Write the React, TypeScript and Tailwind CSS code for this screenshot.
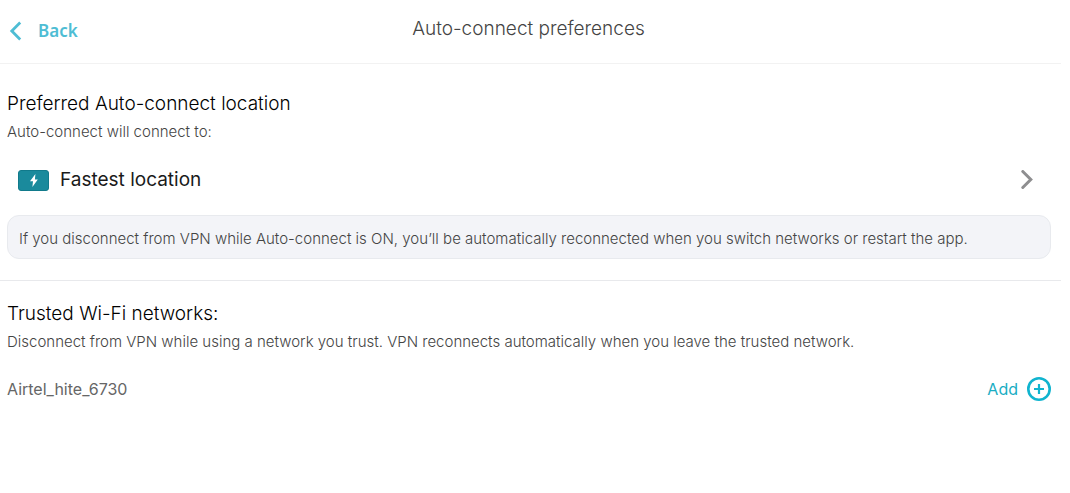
const networks = ['Airtel_hite_6730'];

function Header() {
  return (
    <header className="grid grid-cols-[1fr_auto_1fr] items-start h-16 pt-[17px] pl-2 pr-3 border-b border-[#f2f2f2]">
      <button className="flex items-center gap-4 justify-self-start mt-0.5 font-['Noto_Sans',sans-serif] text-[17px] leading-6 font-semibold text-[#4ebdd4]">
        <svg className="w-[14px] h-5" viewBox="0 0 14 20" fill="none" stroke="currentColor" strokeWidth="2.8" aria-hidden="true">
          <path d="M12.2 1.6 3.8 10l8.4 8.4" />
        </svg>
        Back
      </button>
      <h1 className="text-[19px] leading-6 font-light text-[#444]">Auto-connect preferences</h1>
    </header>
  );
}

function LocationBadge() {
  return (
    <span className="flex items-center justify-center w-[31px] h-[21px] rounded-[3px] border border-[#117a8b] bg-[#1a8a9c]">
      <svg className="w-2 h-[13px]" viewBox="0 0 8 13" fill="#fff" aria-hidden="true">
        <path d="M5.4 0 0 7.3h3L2.4 13 7.8 5.4H4.9z" />
      </svg>
    </span>
  );
}

function AddIcon() {
  return (
    <svg className="w-6 h-6" viewBox="0 0 24 24" fill="none" stroke="#10b4cf" aria-hidden="true">
      <circle cx="12" cy="12" r="10.7" strokeWidth="2.6" />
      <path d="M12 7v10M7 12h10" strokeWidth="2.2" />
    </svg>
  );
}

function SectionTitle({ title, text }: { title: string; text: string }) {
  return (
    <>
      <h2 className="text-[19px] leading-6 font-light text-black">{title}</h2>
      <p className="mt-1 text-[15px] leading-6 font-light text-[#444]">{text}</p>
    </>
  );
}

export default function App() {
  return (
    <div className="min-h-screen bg-white font-['Inter',sans-serif]">
      <main className="mr-[9px]">
        <Header />

        <section className="pl-[7px] pr-[10px] pt-7 pb-[21px] border-b border-[#e8e9ec]">
          <SectionTitle title="Preferred Auto-connect location" text="Auto-connect will connect to:" />

          <button className="mt-6 w-full flex items-center gap-[11px] pl-[11px] pr-[18px] text-left text-[19px] leading-6 text-[#1a1a1a]">
            <LocationBadge />
            <span className="flex-1">Fastest location</span>
            <svg className="w-3 h-5" viewBox="0 0 12 20" fill="none" stroke="#8e8e90" strokeWidth="3" strokeLinecap="round" aria-hidden="true">
              <path d="m1.8 1.5 8 8-8 8" />
            </svg>
          </button>

          <p className="mt-[23px] px-[11px] pt-[11px] pb-[7px] rounded-xl border border-[#e8eaee] bg-[#f3f4f8] text-[15px] leading-6 font-light text-[#444]">
            If you disconnect from VPN while Auto-connect is ON, you’ll be automatically reconnected when you switch networks or restart the app.
          </p>
        </section>

        <section className="pl-[7px] pr-[10px] pt-[21px]">
          <SectionTitle
            title="Trusted Wi-Fi networks:"
            text="Disconnect from VPN while using a network you trust. VPN reconnects automatically when you leave the trusted network."
          />
          <ul className="mt-[23px]">
            {networks.map((name) => (
              <li key={name} className="flex items-center justify-between text-base text-[#666]">
                {name}
                <button className="flex items-center gap-[9px] text-[#19adc3]" aria-label={`Add ${name}`}>
                  Add
                  <AddIcon />
                </button>
              </li>
            ))}
          </ul>
        </section>
      </main>
    </div>
  );
}
